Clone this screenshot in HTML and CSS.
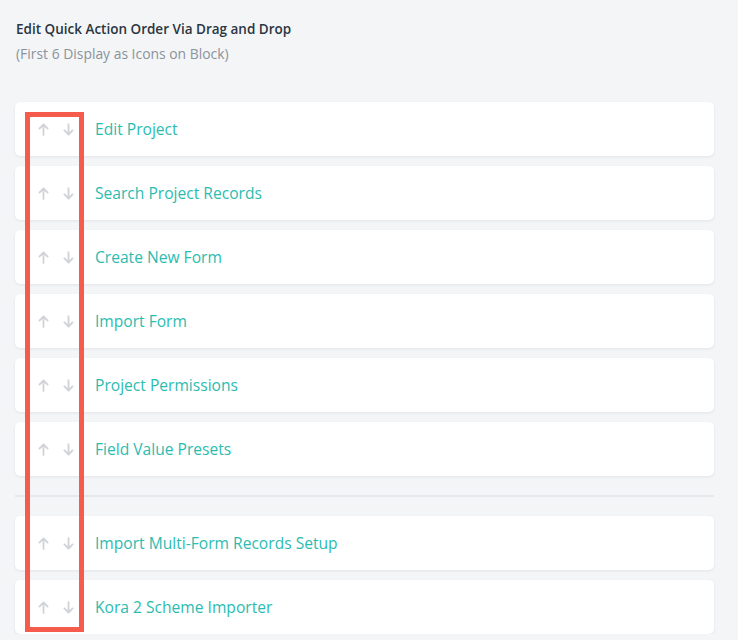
FILE: index.html
```html
<!DOCTYPE html>
<html>
<head>
<meta charset="utf-8">
<link rel="stylesheet" href="styles.css">
</head>
<body>
<div class="page">
  <h1 class="title">Edit Quick Action Order Via Drag and Drop</h1>
  <p class="subtitle">(First 6 Display as Icons on Block)</p>
  <div class="list">
    <div class="card"><span class="arrows"><svg class="arr" viewBox="0 0 10 12"><path d="M5 11V1.5M1.2 5.2L5 1.4l3.8 3.8"/></svg><svg class="arr" viewBox="0 0 10 12"><path d="M5 1v9.5M1.2 6.8L5 10.6l3.8-3.8"/></svg></span><span class="label">Edit Project</span></div>
    <div class="card"><span class="arrows"><svg class="arr" viewBox="0 0 10 12"><path d="M5 11V1.5M1.2 5.2L5 1.4l3.8 3.8"/></svg><svg class="arr" viewBox="0 0 10 12"><path d="M5 1v9.5M1.2 6.8L5 10.6l3.8-3.8"/></svg></span><span class="label">Search Project Records</span></div>
    <div class="card"><span class="arrows"><svg class="arr" viewBox="0 0 10 12"><path d="M5 11V1.5M1.2 5.2L5 1.4l3.8 3.8"/></svg><svg class="arr" viewBox="0 0 10 12"><path d="M5 1v9.5M1.2 6.8L5 10.6l3.8-3.8"/></svg></span><span class="label">Create New Form</span></div>
    <div class="card"><span class="arrows"><svg class="arr" viewBox="0 0 10 12"><path d="M5 11V1.5M1.2 5.2L5 1.4l3.8 3.8"/></svg><svg class="arr" viewBox="0 0 10 12"><path d="M5 1v9.5M1.2 6.8L5 10.6l3.8-3.8"/></svg></span><span class="label">Import Form</span></div>
    <div class="card"><span class="arrows"><svg class="arr" viewBox="0 0 10 12"><path d="M5 11V1.5M1.2 5.2L5 1.4l3.8 3.8"/></svg><svg class="arr" viewBox="0 0 10 12"><path d="M5 1v9.5M1.2 6.8L5 10.6l3.8-3.8"/></svg></span><span class="label">Project Permissions</span></div>
    <div class="card"><span class="arrows"><svg class="arr" viewBox="0 0 10 12"><path d="M5 11V1.5M1.2 5.2L5 1.4l3.8 3.8"/></svg><svg class="arr" viewBox="0 0 10 12"><path d="M5 1v9.5M1.2 6.8L5 10.6l3.8-3.8"/></svg></span><span class="label">Field Value Presets</span></div>
    <div class="divider"></div>
    <div class="card"><span class="arrows"><svg class="arr" viewBox="0 0 10 12"><path d="M5 11V1.5M1.2 5.2L5 1.4l3.8 3.8"/></svg><svg class="arr" viewBox="0 0 10 12"><path d="M5 1v9.5M1.2 6.8L5 10.6l3.8-3.8"/></svg></span><span class="label">Import Multi-Form Records Setup</span></div>
    <div class="card"><span class="arrows"><svg class="arr" viewBox="0 0 10 12"><path d="M5 11V1.5M1.2 5.2L5 1.4l3.8 3.8"/></svg><svg class="arr" viewBox="0 0 10 12"><path d="M5 1v9.5M1.2 6.8L5 10.6l3.8-3.8"/></svg></span><span class="label">Kora 2 Scheme Importer</span></div>
  </div>
  <div class="highlight"></div>
</div>
</body>
</html>
```

FILE: styles.css
```css
html, body {
  margin: 0;
  padding: 0;
  background: #f4f5f7;
}
body {
  font-family: "Open Sans", "Noto Sans", sans-serif;
  overflow: hidden;
}
.page {
  position: relative;
  width: 699px;
  padding: 20px 0 0 15px;
}
.title {
  margin: 0 0 0 1px;
  font-size: 13.5px;
  line-height: 18px;
  font-weight: 600;
  color: #2a3641;
}
.subtitle {
  margin: 7px 0 0 1px;
  font-size: 13.9px;
  line-height: 18px;
  color: #8a939b;
}
.list {
  margin-top: 39px;
  display: flex;
  flex-direction: column;
  gap: 10px;
}
.card {
  height: 54px;
  background: #fff;
  border-radius: 5px;
  box-shadow: 0 1px 3px rgba(20, 30, 50, 0.08);
  display: flex;
  align-items: center;
}
.arrows {
  display: flex;
  align-items: center;
  gap: 14px;
  margin-left: 23px;
  width: 57px;
}
.arr {
  width: 11px;
  height: 13px;
  fill: none;
  stroke: #d0d4d8;
  stroke-width: 1.7;
  stroke-linecap: round;
  stroke-linejoin: round;
}
.label {
  font-size: 15.6px;
  color: #2bbcb0;
}
.divider {
  height: 2px;
  background: #e6e8eb;
  margin: 9px 0;
}
.highlight {
  position: absolute;
  left: 25px;
  top: 112px;
  width: 49px;
  height: 510px;
  border: 5px solid #f55c4b;
}
```
